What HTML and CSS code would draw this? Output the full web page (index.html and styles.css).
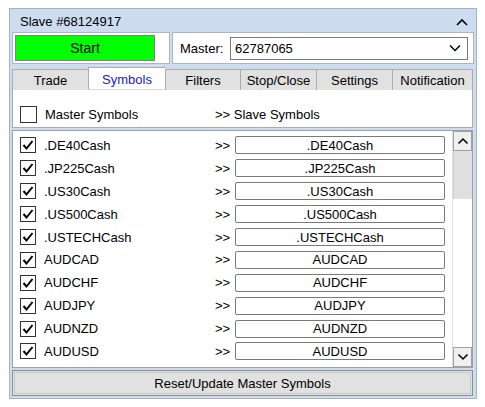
FILE: index.html
```html
<!DOCTYPE html>
<html>
<head>
<meta charset="utf-8">
<link rel="stylesheet" href="styles.css">
</head>
<body>
<div class="panel">
  <div class="titlebar">
    <span class="title">Slave #68124917</span>
    <svg class="caret" width="12" height="8" viewBox="0 0 12 8"><path d="M1 7 L6 2 L11 7" fill="none" stroke="#000" stroke-width="1.6"/></svg>
  </div>
  <div class="toprow">
    <div class="startbox"><div class="startbtn">Start</div></div>
    <div class="masterbox">
      <span class="mlabel">Master:</span>
      <div class="select"><span>62787065</span>
        <svg width="12" height="8" viewBox="0 0 12 8"><path d="M1 1.5 L6 6.5 L11 1.5" fill="none" stroke="#000" stroke-width="1.5"/></svg>
      </div>
    </div>
  </div>
  <div class="tabs">
    <div class="tab w76">Trade</div>
    <div class="tab active w77">Symbols</div>
    <div class="tab w75">Filters</div>
    <div class="tab w76">Stop/Close</div>
    <div class="tab w76">Settings</div>
    <div class="tab w81">Notification</div>
  </div>
  <div class="header">
    <span class="cb"></span>
    <span class="hname">Master Symbols</span>
    <span class="hslave">&gt;&gt; Slave Symbols</span>
  </div>
  <div class="list">
    <div class="rows">
      <div class="row"><span class="cb checked"><svg width="14" height="14" viewBox="0 0 14 14"><path d="M2.5 7 L5.5 10.5 L11.5 3" fill="none" stroke="#000" stroke-width="2"/></svg></span><span class="sym">.DE40Cash</span><span class="arr">&gt;&gt;</span><span class="edit">.DE40Cash</span></div>
      <div class="row"><span class="cb checked"><svg width="14" height="14" viewBox="0 0 14 14"><path d="M2.5 7 L5.5 10.5 L11.5 3" fill="none" stroke="#000" stroke-width="2"/></svg></span><span class="sym">.JP225Cash</span><span class="arr">&gt;&gt;</span><span class="edit">.JP225Cash</span></div>
      <div class="row"><span class="cb checked"><svg width="14" height="14" viewBox="0 0 14 14"><path d="M2.5 7 L5.5 10.5 L11.5 3" fill="none" stroke="#000" stroke-width="2"/></svg></span><span class="sym">.US30Cash</span><span class="arr">&gt;&gt;</span><span class="edit">.US30Cash</span></div>
      <div class="row"><span class="cb checked"><svg width="14" height="14" viewBox="0 0 14 14"><path d="M2.5 7 L5.5 10.5 L11.5 3" fill="none" stroke="#000" stroke-width="2"/></svg></span><span class="sym">.US500Cash</span><span class="arr">&gt;&gt;</span><span class="edit">.US500Cash</span></div>
      <div class="row"><span class="cb checked"><svg width="14" height="14" viewBox="0 0 14 14"><path d="M2.5 7 L5.5 10.5 L11.5 3" fill="none" stroke="#000" stroke-width="2"/></svg></span><span class="sym">.USTECHCash</span><span class="arr">&gt;&gt;</span><span class="edit">.USTECHCash</span></div>
      <div class="row"><span class="cb checked"><svg width="14" height="14" viewBox="0 0 14 14"><path d="M2.5 7 L5.5 10.5 L11.5 3" fill="none" stroke="#000" stroke-width="2"/></svg></span><span class="sym">AUDCAD</span><span class="arr">&gt;&gt;</span><span class="edit">AUDCAD</span></div>
      <div class="row"><span class="cb checked"><svg width="14" height="14" viewBox="0 0 14 14"><path d="M2.5 7 L5.5 10.5 L11.5 3" fill="none" stroke="#000" stroke-width="2"/></svg></span><span class="sym">AUDCHF</span><span class="arr">&gt;&gt;</span><span class="edit">AUDCHF</span></div>
      <div class="row"><span class="cb checked"><svg width="14" height="14" viewBox="0 0 14 14"><path d="M2.5 7 L5.5 10.5 L11.5 3" fill="none" stroke="#000" stroke-width="2"/></svg></span><span class="sym">AUDJPY</span><span class="arr">&gt;&gt;</span><span class="edit">AUDJPY</span></div>
      <div class="row"><span class="cb checked"><svg width="14" height="14" viewBox="0 0 14 14"><path d="M2.5 7 L5.5 10.5 L11.5 3" fill="none" stroke="#000" stroke-width="2"/></svg></span><span class="sym">AUDNZD</span><span class="arr">&gt;&gt;</span><span class="edit">AUDNZD</span></div>
      <div class="row"><span class="cb checked"><svg width="14" height="14" viewBox="0 0 14 14"><path d="M2.5 7 L5.5 10.5 L11.5 3" fill="none" stroke="#000" stroke-width="2"/></svg></span><span class="sym">AUDUSD</span><span class="arr">&gt;&gt;</span><span class="edit">AUDUSD</span></div>
    </div>
    <div class="scrollbar">
      <div class="sbtn"><svg width="12" height="8" viewBox="0 0 12 8"><path d="M1.5 6.5 L6 2 L10.5 6.5" fill="none" stroke="#000" stroke-width="1.5"/></svg></div>
      <div class="thumb"></div>
      <div class="track"></div>
      <div class="sbtn"><svg width="12" height="8" viewBox="0 0 12 8"><path d="M1.5 1.5 L6 6 L10.5 1.5" fill="none" stroke="#000" stroke-width="1.5"/></svg></div>
    </div>
  </div>
  <div class="reset"><div class="resetin">Reset/Update Master Symbols</div></div>
</div>
</body>
</html>
```
FILE: styles.css
```css
* { box-sizing: border-box; }
body {
  margin: 0;
  background: #fff;
  font-family: "Liberation Sans", Arial, sans-serif;
  font-size: 13px;
  color: #000;
}
.panel {
  margin: 8px 0 0 9px;
  width: 468px;
  height: 391px;
  border: 1px solid #a3b3c9;
  background: #cddcef;
  padding: 0 2px;
}
.titlebar {
  height: 23px;
  display: flex;
  align-items: center;
  justify-content: space-between;
  padding: 0 6px 0 8px;
}
.title { position: relative; top: 1px; }
.caret { margin-top: 2px; }
.toprow {
  display: flex;
  gap: 2px;
  height: 32px;
}
.startbox {
  width: 158px;
  background: #fff;
  border: 1px solid #a9b6c8;
  padding: 2px;
}
.startbtn {
  width: 140px;
  height: 26px;
  background: #00ff00;
  border: 1px solid #808080;
  display: flex;
  align-items: center;
  justify-content: center;
  font-size: 14px;
}
.masterbox {
  width: 302px;
  background: #fff;
  border: 1px solid #a9b6c8;
  display: flex;
  align-items: center;
  padding: 0 5px 0 7px;
}
.mlabel { width: 50px; font-size: 13px; }
.select {
  flex: 1;
  height: 23px;
  border: 1px solid #7a7a7a;
  display: flex;
  align-items: center;
  justify-content: space-between;
  padding: 0 6px 0 4px;
}
.tabs {
  display: flex;
  margin-top: 5px;
  height: 21px;
}
.tab {
  background: #e1e1e1;
  border: 1px solid #acacac;
  border-right: none;
  border-bottom: none;
  display: flex;
  align-items: center;
  justify-content: center;
  height: 21px;
}
.tab:last-child { border-right: 1px solid #acacac; }
.tab.active {
  background: #fff;
  color: #1a1ac8;
  height: 22px;
  margin-top: -2px;
  padding-top: 1px;
  position: relative;
}
.w76 { width: 76px; }
.w77 { width: 77px; }
.w75 { width: 75px; }
.w81 { width: 81px; }
.header {
  width: 461px;
  height: 38px;
  background: #fff;
  border: 1px solid #acacac;
  border-top: none;
  display: flex;
  align-items: center;
  padding: 11px 0 0 7px;
}
.cb {
  width: 17px;
  height: 17px;
  border: 1px solid #333;
  background: #fff;
  display: flex;
  align-items: center;
  justify-content: center;
  flex: none;
}
.hname { margin-left: 8px; width: 170px; }
.list {
  margin-top: 2px;
  width: 461px;
  height: 238px;
  background: #fff;
  border: 1px solid #a0a0a0;
  display: flex;
}
.rows {
  flex: 1;
  padding: 3px 0 0 7px;
  display: flex;
  flex-direction: column;
}
.row {
  height: 22.9px;
  display: flex;
  align-items: center;
  flex: none;
}
.row .cb { width: 16px; height: 16px; }
.sym { margin-left: 8px; width: 171px; }
.arr { width: 20px; }
.edit {
  width: 210px;
  height: 18px;
  border: 1px solid #7a7a7a;
  border-radius: 2px;
  display: flex;
  align-items: center;
  justify-content: center;
}
.scrollbar {
  width: 20px;
  display: flex;
  flex-direction: column;
  border-left: 1px solid #e0e0e0;
}
.sbtn {
  height: 20px;
  background: #f0f0f0;
  border: 1px solid #a0a0a0;
  display: flex;
  align-items: center;
  justify-content: center;
}
.thumb {
  height: 48px;
  background: #e0e0e0;
  border-left: 1px solid #d0d0d0;
}
.track { flex: 1; background: #fff; }
.reset {
  margin-top: 2px;
  width: 461px;
  height: 26px;
  border: 1px solid #8f8f8f;
  padding: 1px;
  background: #e1e1e1;
}
.resetin {
  height: 100%;
  border: 1px solid #c8c8c8;
  display: flex;
  align-items: center;
  justify-content: center;
}
```
